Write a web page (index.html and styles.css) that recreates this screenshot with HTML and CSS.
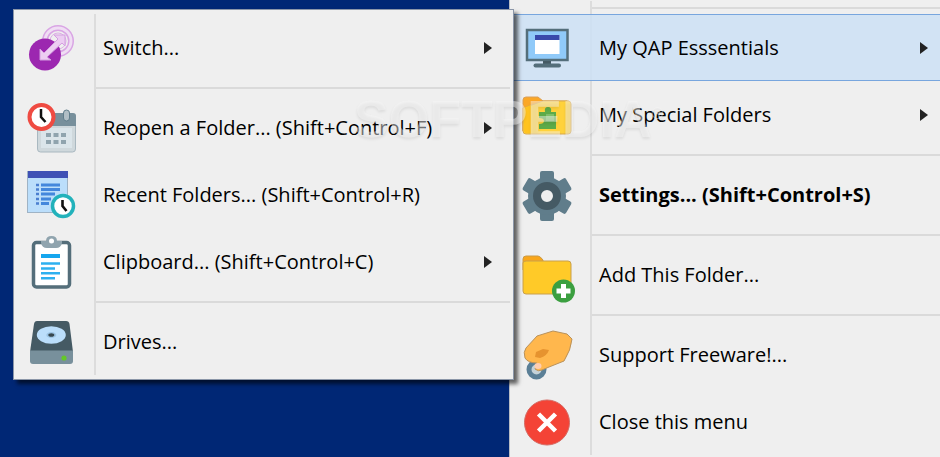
FILE: index.html
```html
<!DOCTYPE html>
<html lang="en">
<head>
    <meta charset="utf-8">
    <title>QAP Menu</title>
    <link rel="stylesheet" href="styles.css">
</head>
<body>
    <div class="desktop">
        <nav class="menu submenu">
            <ul class="menu-list">
                <li>
                    <button class="item">
                        <svg class="icon" viewBox="0 0 54 54">
                            <circle cx="34" cy="20" r="13" fill="none" stroke="#d9a5e4" stroke-width="6"/>
                            <circle cx="34" cy="20" r="13" fill="none" stroke="#f0def4" stroke-width="3"/>
                            <circle cx="34" cy="20" r="8" fill="none" stroke="#dcb0e5" stroke-width="1"/>
                            <circle cx="21" cy="33.5" r="16" fill="#9c27b0"/>
                            <path d="M30 14H41V25L38 22L23 36L27 39H16V28L20 32L34 18Z" fill="#eccdf2" stroke="#d49fe0" stroke-width="1"/>
                        </svg>
                        <span class="label">Switch...</span>
                        <span class="arrow"></span>
                    </button>
                </li>
                <li class="separator"></li>
                <li>
                    <button class="item">
                        <svg class="icon" viewBox="0 0 54 54">
                            <rect x="13.5" y="13" width="38" height="38" rx="3" fill="#cfd8dc" stroke="#a9b8c0"/>
                            <path d="M13 25V14Q13 12 16 12H49Q52 12 52 15V25Z" fill="#78909c"/>
                            <rect x="17" y="27" width="31" height="20" fill="#dbe5ea"/>
                            <rect x="39.5" y="9" width="6" height="11" rx="3" fill="#b0bec5" stroke="#607d8b"/>
                            <path d="M22 32h5v4h-5zM29.5 32h5v4h-5zM37 32h5v4h-5zM22 39h5v4h-5zM29.5 39h5v4h-5zM37 39h5v4h-5z" fill="#90a4ae"/>
                            <circle cx="17.5" cy="16" r="12" fill="#fff" stroke="#ef4b42" stroke-width="4"/>
                            <path d="M17 8V16L21.500 21" fill="none" stroke="#111" stroke-width="2.5"/>
                        </svg>
                        <span class="label">Reopen a Folder... (Shift+Control+F)</span>
                        <span class="arrow"></span>
                    </button>
                </li>
                <li>
                    <button class="item">
                        <svg class="icon" viewBox="0 0 54 54">
                            <rect x="3.5" y="3.5" width="40" height="41" fill="#bbdefb" stroke="#9fb3c5"/>
                            <rect x="4" y="3" width="40" height="7" fill="#3f51b5"/>
                            <path d="M12 17h3M12 21.5h3M12 26h3M12 31h3M12 35.5h3" stroke="#4b7fd0" stroke-width="2.6"/>
                            <path d="M17 17h19M17 21.5h19M17 26h14M17 31h10M17 35.5h8" stroke="#4387dc" stroke-width="2.8"/>
                            <circle cx="39" cy="38" r="10.5" fill="#fff" stroke="#22b2bb" stroke-width="3.5"/>
                            <path d="M38.5 32V38L42.5 43" fill="none" stroke="#111" stroke-width="2.6"/>
                        </svg>
                        <span class="label">Recent Folders... (Shift+Control+R)</span>
                    </button>
                </li>
                <li>
                    <button class="item">
                        <svg class="icon" viewBox="0 0 54 54">
                            <rect x="9.5" y="7.5" width="36" height="44.5" rx="3" fill="#fff" stroke="#546e7a" stroke-width="3.5"/>
                            <path d="M17 6H22Q22 1 27.5 1T33 6H38V8Q37 13 32 13H23Q18 13 17 8Z" fill="#90a4ae"/>
                            <circle cx="27.5" cy="6" r="2.5" fill="#fff"/>
                            <path d="M17 21h19" stroke="#16a6ee" stroke-width="4"/>
                            <path d="M17 28.5h19M17 33.5h14M17 38.3h19M17 43.2h14" stroke="#2eb0ef" stroke-width="2.6"/>
                        </svg>
                        <span class="label">Clipboard... (Shift+Control+C)</span>
                        <span class="arrow"></span>
                    </button>
                </li>
                <li class="separator"></li>
                <li>
                    <button class="item">
                        <svg class="icon" viewBox="0 0 54 54">
                            <path d="M13 6H42Q45 6 45.5 9L49 37H6L10 9Q10.5 6 13 6Z" fill="#455a64"/>
                            <path d="M6 35.5H49V46Q49 49 46 49H9Q6 49 6 46Z" fill="#78909c"/>
                            <ellipse cx="27.3" cy="20" rx="14.5" ry="8.7" fill="#bbdefb"/>
                            <ellipse cx="27.3" cy="20" rx="5" ry="3" fill="#9cc4e4"/>
                            <ellipse cx="27.3" cy="20" rx="3" ry="1.8" fill="#37474f"/>
                            <circle cx="40" cy="43" r="2.6" fill="#64c828"/>
                        </svg>
                        <span class="label">Drives...</span>
                    </button>
                </li>
            </ul>
        </nav>

        <nav class="menu main-menu">
            <ul class="menu-list">
                <li class="separator"></li>
                <li>
                    <button class="item selected">
                        <svg class="icon" viewBox="0 0 54 54">
                            <rect x="7" y="9" width="40.5" height="30" fill="#90caf9" stroke="#546e7a" stroke-width="2.5"/>
                            <rect x="23" y="40" width="8" height="4" fill="#455a64"/>
                            <rect x="13.5" y="42.5" width="27.5" height="4" rx="2" fill="#546e7a"/>
                            <rect x="15" y="14" width="24.5" height="19" fill="#fff"/>
                            <rect x="15" y="14" width="24.5" height="5" fill="#3949ab"/>
                        </svg>
                        <span class="label">My QAP Esssentials</span>
                        <span class="arrow"></span>
                    </button>
                </li>
                <li>
                    <button class="item">
                        <svg class="icon" viewBox="0 0 54 54">
                            <path d="M3 43V12Q3 9 6 9H18L23 13H47V20H3Z" fill="#fba726" stroke="#d9a05a"/>
                            <path d="M3 20L23 13H48Q51 13 51 16V43Q51 46 48 46H6Q3 46 3 43Z" fill="#ffd23b" stroke="#d9a94c"/>
                            <path d="M4 20L11 17V45H6Q4 45 4 43Z" fill="#ffc320"/>
                            <path d="M19 24H25Q24 19 28 19T31 24H36V41H19V36Q24 36 24 33T19 30Z" fill="#5dab48"/>
                            <path d="M26 26H34V33H26Z" fill="#7fbf68"/>
                        </svg>
                        <span class="label">My Special Folders</span>
                        <span class="arrow"></span>
                    </button>
                </li>
                <li class="separator"></li>
                <li>
                    <button class="item">
                        <svg class="icon" viewBox="0 0 54 54">
                            <g fill="#607d8b">
                                <rect x="20" y="3" width="14" height="50" rx="2"/>
                                <rect x="20" y="3" width="14" height="50" rx="2" transform="rotate(60 27 28)"/>
                                <rect x="20" y="3" width="14" height="50" rx="2" transform="rotate(120 27 28)"/>
                                <circle cx="27" cy="28" r="19"/>
                            </g>
                            <circle cx="27" cy="28" r="10" fill="#efefef" stroke="#455a64" stroke-width="8"/>
                        </svg>
                        <span class="label default">Settings... (Shift+Control+S)</span>
                    </button>
                </li>
                <li class="separator"></li>
                <li>
                    <button class="item">
                        <svg class="icon" viewBox="0 0 54 54">
                            <path d="M3 20V11Q3 8 6 8H18Q20 8 23 12V16L3 22Z" fill="#f9a61a" stroke="#c99a48"/>
                            <path d="M3 15Q3 13 6 13H48Q51 13 51 16V43Q51 46 48 46H6Q3 46 3 43Z" fill="#ffca28" stroke="#c9a04c"/>
                            <circle cx="43.5" cy="43" r="11.5" fill="#3b9f40"/>
                            <path d="M43.5 36V50M36.5 43H50.5" stroke="#fff" stroke-width="5"/>
                        </svg>
                        <span class="label">Add This Folder...</span>
                    </button>
                </li>
                <li class="separator"></li>
                <li>
                    <button class="item">
                        <svg class="icon" viewBox="0 0 54 54">
                            <circle cx="16.5" cy="41.5" r="7.5" fill="#c5d2d8" stroke="#5b7f96" stroke-width="5"/>
                            <path d="M5 30Q3 24 6 20L17 8L33 3L47 6L52 11Q51 22 44 33L29 39L22 42Q18 44 15 41L17 35Q8 35 5 30Z" fill="#ffb74d" stroke="#b9925c"/>
                            <path d="M16 24L23 21L29 22Q27 28 20 30L15 29Z" fill="#e6932f"/>
                            <ellipse cx="18" cy="38" rx="3.5" ry="3" fill="#ffcdb0"/>
                        </svg>
                        <span class="label">Support Freeware!...</span>
                    </button>
                </li>
                <li>
                    <button class="item">
                        <svg class="icon" viewBox="0 0 54 54">
                            <circle cx="27" cy="27.5" r="22.5" fill="#f44336" stroke="#d56a63"/>
                            <path d="M18.5 19L35.5 36M35.5 19L18.5 36" stroke="#fff" stroke-width="4.5"/>
                        </svg>
                        <span class="label">Close this menu</span>
                    </button>
                </li>
            </ul>
        </nav>

        <div class="watermark">SOFTPEDIA<sup>®</sup></div>
    </div>
</body>
</html>
```
FILE: styles.css
```css
* {
    box-sizing: border-box;
}

body {
    margin: 0;
    background-color: #002775;
    font-family: "Open Sans", "Noto Sans", sans-serif;
}

.desktop {
    display: flex;
    align-items: flex-start;
    position: relative;
    min-height: 100vh;
    overflow: hidden;
}

.menu {
    background-color: #efefef;
}

.submenu {
    position: relative;
    z-index: 1;
    flex: 0 0 501px;
    margin: 9px -5px 0 13px;
    padding: 4px 3px;
    border: 1px solid #8b96a8;
    box-shadow: 4px 4px 4px rgba(0, 0, 0, 0.6);
}

.main-menu {
    flex: 1;
    align-self: stretch;
    padding: 1px 0 2px 3px;
    border-left: 1px solid #b8bcc4;
}

.menu-list {
    list-style: none;
    margin: 0;
    padding: 0;
    background: linear-gradient(#dcdcdc, #dcdcdc) 77px 0 / 2px 100% no-repeat;
}

.item {
    display: flex;
    align-items: center;
    gap: 25px;
    width: 100%;
    height: 67px;
    padding: 0 18px 0 7px;
    border: 1px solid transparent;
    border-width: 1px 0;
    background: none;
    color: #000;
    font-family: inherit;
    font-size: 20px;
    line-height: 28px;
    text-align: left;
}

.main-menu .item {
    padding-right: 12px;
}

.item.selected {
    background-color: rgba(204, 225, 244, 0.85);
    border-color: #78a6de;
}

.icon {
    flex: none;
    width: 54px;
    height: 54px;
    overflow: visible;
}

.label {
    flex: 1;
    white-space: nowrap;
}

.default {
    font-weight: bold;
}

.arrow {
    border: 6px solid transparent;
    border-left: 8px solid #222;
    border-right: 0;
}

.separator {
    height: 13px;
    padding: 6px 0 0 79px;
}

.separator::after {
    content: "";
    display: block;
    height: 2px;
    background-color: #dadada;
}

.watermark {
    position: absolute;
    top: 90px;
    left: 354px;
    z-index: 2;
    color: rgba(248, 248, 248, 0.45);
    font-family: "Liberation Sans", sans-serif;
    font-size: 52px;
    font-weight: bold;
    line-height: 58px;
    text-shadow: 0 2px 3px rgba(0, 0, 0, 0.08);
    pointer-events: none;
}

.watermark sup {
    font-size: 16px;
    line-height: 16px;
    vertical-align: super;
}
```
